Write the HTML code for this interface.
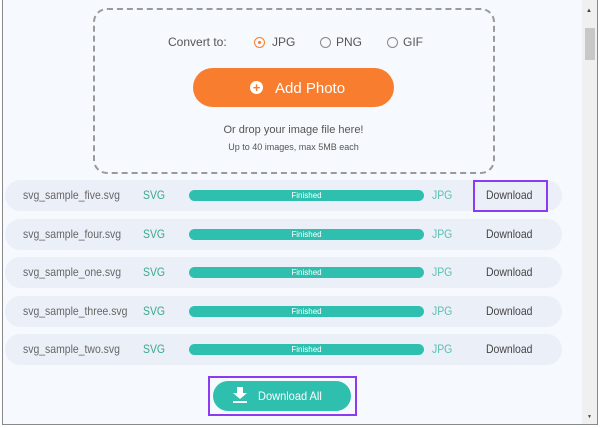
<!DOCTYPE html>
<html><head><style>
body{margin:0;width:600px;height:428px;background:#fff;font-family:"Liberation Sans",sans-serif;position:relative;overflow:hidden}
.frame{position:absolute;left:2px;top:0;width:594px;height:424px;border:1px solid #888;border-top:none;background:#f6f9fd}
.sb{position:absolute;left:582px;top:0;width:15px;height:424px;background:#f0f0f0}
.thumb{position:absolute;left:585px;top:28px;width:10px;height:32px;background:#c8c8c8}
.drop{position:absolute;left:93px;top:8px;width:398px;height:162px;border:2px dashed #9a9a9a;border-radius:14px}
.t{position:absolute;white-space:nowrap;color:#555}
.radio{position:absolute;width:9px;height:9px;border:1px solid #888;border-radius:50%}
.add{position:absolute;left:193px;top:68px;width:201px;height:39px;border-radius:20px;background:#f97d2f;color:#fff;font-size:15px}
.row{position:absolute;left:5px;width:557px;height:31px;border-radius:16px;background:#ebeff8}
.row span{position:absolute;top:8px;font-size:12px;white-space:nowrap;transform:scaleX(.87);transform-origin:left}
.bar{position:absolute;left:184px;top:10px;width:235px;height:11px;border-radius:6px;background:#2fbfae;color:#fff;font-size:8px;text-align:center;line-height:11px}
.dl{position:absolute;left:213px;top:381px;width:138px;height:30px;border-radius:15px;background:#2fbfae;color:#fff;font-size:12px}
.pb{position:absolute;border:2px solid #8b3cf0}
</style></head><body>
<div class="frame"></div>
<div class="sb"></div><div class="thumb"></div>
<div style="position:absolute;left:586px;top:8px;font-size:6px;color:#444">▲</div>
<div style="position:absolute;left:587px;top:414px;font-size:5px;color:#444">▼</div>
<div class="drop"></div>
<div class="t" style="left:168px;top:35px;font-size:12px">Convert to:</div>
<div class="radio" style="left:254px;top:37px;border-color:#f97d2f"></div><div style="position:absolute;left:258px;top:41px;width:3px;height:3px;border-radius:50%;background:#f97d2f"></div>
<div class="t" style="left:272px;top:35px;font-size:12px">JPG</div>
<div class="radio" style="left:320px;top:37px"></div>
<div class="t" style="left:336px;top:35px;font-size:12px">PNG</div>
<div class="radio" style="left:387px;top:37px"></div>
<div class="t" style="left:403px;top:35px;font-size:12px">GIF</div>
<div class="add"><div style="position:absolute;left:57px;top:13px;width:13px;height:13px;border-radius:50%;background:#fff;color:#f97d2f;font-size:13px;line-height:13px;text-align:center;font-weight:bold">+</div><span style="position:absolute;left:82px;top:12px">Add Photo</span></div>
<div class="t" style="left:0;width:587px;text-align:center;top:124px;font-size:11px">Or drop your image file here!</div>
<div class="t" style="left:0;width:587px;text-align:center;top:142px;font-size:9px">Up to 40 images, max 5MB each</div>

<div class="row" style="top:180px"><span style="left:18px;color:#666">svg_sample_five.svg</span><span style="left:138px;color:#3aa88f">SVG</span><div class="bar">Finished</div><span style="left:427px;color:#5bc0b2">JPG</span><span style="left:481px;color:#444">Download</span></div>
<div class="row" style="top:219px"><span style="left:18px;color:#666">svg_sample_four.svg</span><span style="left:138px;color:#3aa88f">SVG</span><div class="bar">Finished</div><span style="left:427px;color:#5bc0b2">JPG</span><span style="left:481px;color:#444">Download</span></div>
<div class="row" style="top:257px"><span style="left:18px;color:#666">svg_sample_one.svg</span><span style="left:138px;color:#3aa88f">SVG</span><div class="bar">Finished</div><span style="left:427px;color:#5bc0b2">JPG</span><span style="left:481px;color:#444">Download</span></div>
<div class="row" style="top:296px"><span style="left:18px;color:#666">svg_sample_three.svg</span><span style="left:138px;color:#3aa88f">SVG</span><div class="bar">Finished</div><span style="left:427px;color:#5bc0b2">JPG</span><span style="left:481px;color:#444">Download</span></div>
<div class="row" style="top:334px"><span style="left:18px;color:#666">svg_sample_two.svg</span><span style="left:138px;color:#3aa88f">SVG</span><div class="bar">Finished</div><span style="left:427px;color:#5bc0b2">JPG</span><span style="left:481px;color:#444">Download</span></div>
<div class="pb" style="left:473px;top:180px;width:71px;height:28px"></div>

<div class="dl"><svg style="position:absolute;left:20px;top:6px" width="14" height="17" viewBox="0 0 14 17"><path d="M4 0h6v6h4L7 12 0 6h4z" fill="#fff"/><rect x="0" y="14" width="14" height="2" fill="#fff"/></svg><span style="position:absolute;left:45px;top:8px;transform:scaleX(.92);transform-origin:left">Download All</span></div>
<div class="pb" style="left:208px;top:376px;width:145px;height:36px"></div>
</body></html>
